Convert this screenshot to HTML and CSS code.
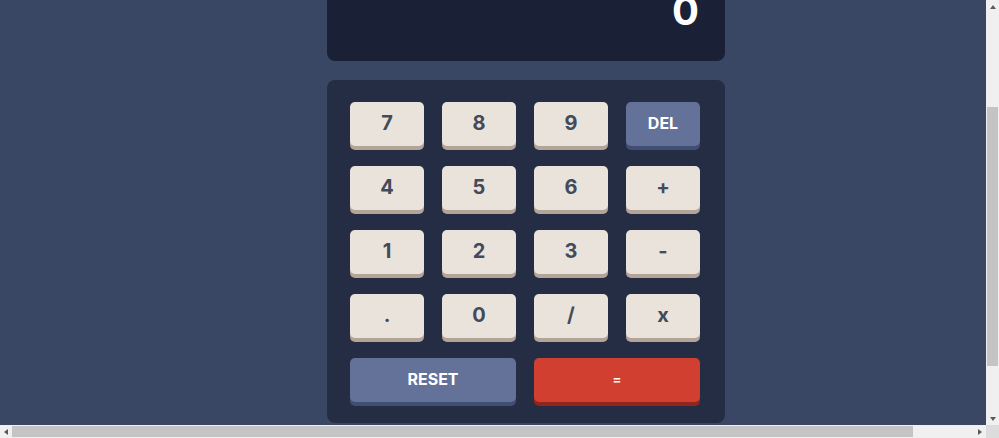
FILE: index.html
```html
<!DOCTYPE html>
<html lang="en">
<head>
<meta charset="utf-8">
<title>Calculator</title>
<link rel="stylesheet" href="styles.css">
</head>
<body>
<main class="page">
  <div class="calc">
    <section class="screen">
      <output class="screen-value">0</output>
    </section>
    <section class="keypad">
      <button class="key">7</button>
      <button class="key">8</button>
      <button class="key">9</button>
      <button class="key key-fn">DEL</button>
      <button class="key">4</button>
      <button class="key">5</button>
      <button class="key">6</button>
      <button class="key">+</button>
      <button class="key">1</button>
      <button class="key">2</button>
      <button class="key">3</button>
      <button class="key">-</button>
      <button class="key">.</button>
      <button class="key">0</button>
      <button class="key">/</button>
      <button class="key">x</button>
      <button class="key key-fn key-wide">RESET</button>
      <button class="key key-equals key-wide">=</button>
    </section>
  </div>
</main>

<div class="sb sb-v" aria-hidden="true">
  <span class="sb-btn arrow-up"></span>
  <span class="sb-track sb-track-v"><span class="sb-thumb sb-thumb-v"></span></span>
  <span class="sb-btn arrow-down"></span>
</div>
<div class="sb sb-h" aria-hidden="true">
  <span class="sb-btn arrow-left"></span>
  <span class="sb-track sb-track-h"><span class="sb-thumb sb-thumb-h"></span></span>
  <span class="sb-btn arrow-right"></span>
</div>
<div class="sb-corner" aria-hidden="true"></div>

<script src="main.js"></script>
</body>
</html>
```
FILE: styles.css
```css
* { box-sizing: border-box; }

html, body {
  margin: 0;
  padding: 0;
  background: #3a4764;
}

body {
  font-family: "Inter", "Noto Sans", sans-serif;
  color: #ffffff;
}

.page {
  width: 1052px;
  padding: 84px 0 77px;
}

.calc {
  width: 398px;
  margin: 0 auto;
  display: flex;
  flex-direction: column;
}

.screen {
  height: 127px;
  background: #1a2035;
  border-radius: 8px;
  display: flex;
  align-items: flex-end;
  justify-content: flex-end;
  padding: 0 26px 30px;
}

.screen-value {
  font-size: 40px;
  line-height: 1;
  font-weight: 700;
  color: #ffffff;
}

.keypad {
  margin-top: 19px;
  background: #242d44;
  border-radius: 8px;
  padding: 22px 25px 21px 23px;
  display: grid;
  grid-template-columns: repeat(4, 1fr);
  column-gap: 18px;
  row-gap: 20px;
}

.key {
  height: 44px;
  border: none;
  border-radius: 5px;
  background: #eae3dc;
  box-shadow: 0 4px 0 #b3a497;
  color: #434a59;
  font-family: "Inter", "Noto Sans", sans-serif;
  font-size: 20px;
  font-weight: 700;
  padding: 0 0 3px;
  cursor: pointer;
}

.key-fn {
  background: #647198;
  box-shadow: 0 4px 0 #414e73;
  color: #ffffff;
  font-size: 16px;
}

.key-wide {
  grid-column: span 2;
}

.key-equals {
  background: #d03f2f;
  box-shadow: 0 4px 0 #93261a;
  color: #ffffff;
  font-size: 13px;
}

/* browser scrollbars, drawn over the viewport edges */
.sb {
  position: fixed;
  display: flex;
  background: #f0f0f0;
  z-index: 10;
}

.sb-v {
  top: 0;
  right: 0;
  width: 13px;
  bottom: 13px;
  flex-direction: column;
}

.sb-h {
  left: 0;
  bottom: 0;
  right: 13px;
  height: 13px;
  flex-direction: row;
}

.sb-corner {
  position: fixed;
  right: 0;
  bottom: 0;
  width: 13px;
  height: 13px;
  background: #dcdcdc;
  z-index: 10;
}

.sb-btn {
  flex: 0 0 13px;
  display: flex;
  align-items: center;
  justify-content: center;
}

.sb-h .sb-btn {
  flex-basis: 12px;
}

.sb-btn::before {
  content: "";
  width: 0;
  height: 0;
  border-style: solid;
  border-color: transparent;
}

.arrow-up::before {
  border-width: 0 3px 4px 3px;
  border-bottom-color: #5a5a5a;
}

.arrow-down::before {
  border-width: 4px 3px 0 3px;
  border-top-color: #5a5a5a;
}

.arrow-left::before {
  border-width: 3px 4px 3px 0;
  border-right-color: #5a5a5a;
}

.arrow-right::before {
  border-width: 3px 0 3px 4px;
  border-left-color: #5a5a5a;
}

.sb-track {
  flex: 1;
  display: flex;
}

.sb-track-v {
  flex-direction: column;
  padding: 94px 1px 0;
}

.sb-track-h {
  flex-direction: row;
  padding: 1px 0;
}

.sb-thumb {
  background: #c4c4c4;
}

.sb-thumb-v {
  height: 259px;
}

.sb-thumb-h {
  width: 901px;
}
```
FILE: main.js
```js
function scrollToCalc() {
  window.scrollTo(0, 150);
}
scrollToCalc();
window.addEventListener('load', scrollToCalc);
```
